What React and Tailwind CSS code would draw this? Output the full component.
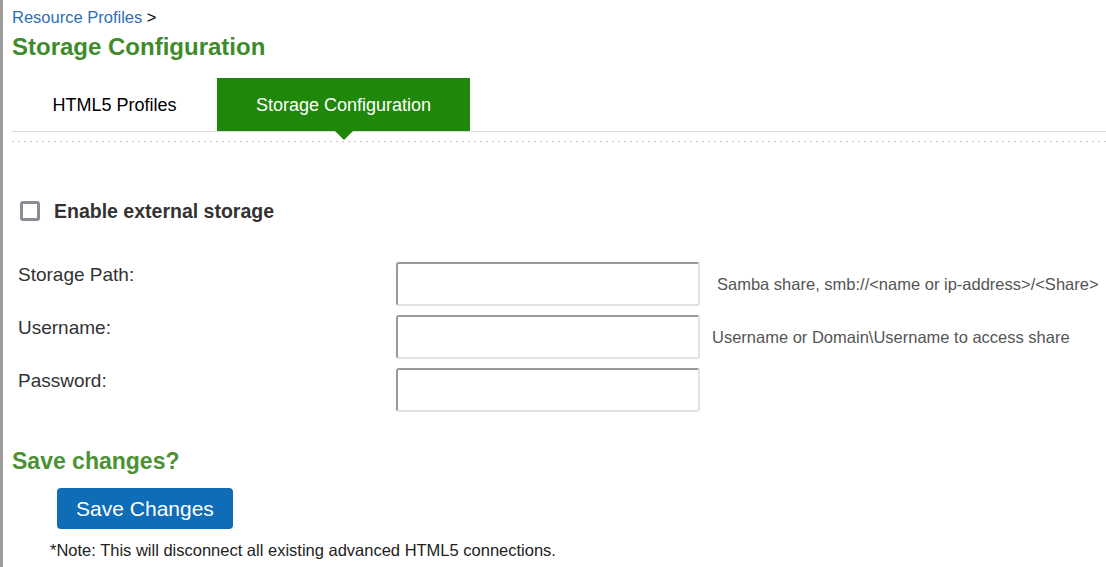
import React from 'react';

function FieldRow({ label, type = 'text', help, helpGap }) {
    return (
        <div className="flex items-start">
            <label className="w-[384px] pl-[6px] pt-[2px] text-[19px] leading-[22px] text-[#333]">{label}</label>
            <input
                type={type}
                className="w-[304px] h-[44px] border-2 border-t-[#9a9a9a] border-l-[#9a9a9a] border-b-[#e2e2e2] border-r-[#e2e2e2] rounded-[3px] bg-white outline-none px-2"
            />
            {help && (
                <span className={`self-center text-[16.5px] leading-[20px] text-[#555] ${helpGap}`}>{help}</span>
            )}
        </div>
    );
}

export default function App() {
    return (
        <div className="min-h-screen bg-white border-l-[3px] border-[#9b9b9b] pl-[9px] pt-[7px] font-['Liberation_Sans',Arial,sans-serif]">
            {/* Breadcrumb */}
            <div className="text-[16.5px] leading-[20px] text-black">
                <a href="#" className="text-[#2d6fb7]">Resource Profiles</a> &gt;
            </div>
            <h1 className="mt-[6px] text-[24px] leading-[28px] font-bold text-[#3f8b2c]">Storage Configuration</h1>

            {/* Tabs */}
            <div className="mt-[17px] flex h-[54px] border-b border-[#dcdcdc]">
                <div className="w-[205px] h-full flex items-center justify-center pt-px text-[18px] text-black">HTML5 Profiles</div>
                <div className="relative w-[253px] h-full flex items-center justify-center pt-px bg-[#1f8709] text-[18px] text-white">
                    Storage Configuration
                    <span className="absolute top-full left-1/2 -translate-x-1/2 w-0 h-0 border-l-[9px] border-r-[9px] border-t-[9px] border-l-transparent border-r-transparent border-t-[#1f8709]"></span>
                </div>
            </div>
            <div className="mt-[9px] h-px bg-[linear-gradient(to_right,#c8c8c8_2px,transparent_2px)] bg-[length:6px_1px]"></div>

            {/* Enable checkbox */}
            <label className="mt-[58px] flex items-center">
                <span className="ml-[8px] w-[20px] h-[20px] border-[3px] border-[#8c8c96] rounded-[3px] bg-white"></span>
                <span className="ml-[14px] text-[19.5px] leading-[22px] font-bold text-[#333]">Enable external storage</span>
            </label>

            {/* Fields */}
            <div className="mt-[40px] flex flex-col gap-[9px]">
                <FieldRow label="Storage Path:" help="Samba share, smb://<name or ip-address>/<Share>" helpGap="ml-[17px]" />
                <FieldRow label="Username:" help="Username or Domain\Username to access share" helpGap="ml-[12px]" />
                <FieldRow label="Password:" type="password" />
            </div>

            {/* Save */}
            <h2 className="mt-[36px] text-[23px] leading-[26px] font-bold text-[#4a9233]">Save changes?</h2>
            <button className="mt-[14px] ml-[45px] w-[176px] h-[41px] bg-[#0f6cb6] rounded-[4px] text-white text-[21px] leading-[24px]">
                Save Changes
            </button>
            <p className="mt-[12px] ml-[38px] text-[16.5px] leading-[18px] text-[#222]">
                *Note: This will disconnect all existing advanced HTML5 connections.
            </p>
        </div>
    );
}
